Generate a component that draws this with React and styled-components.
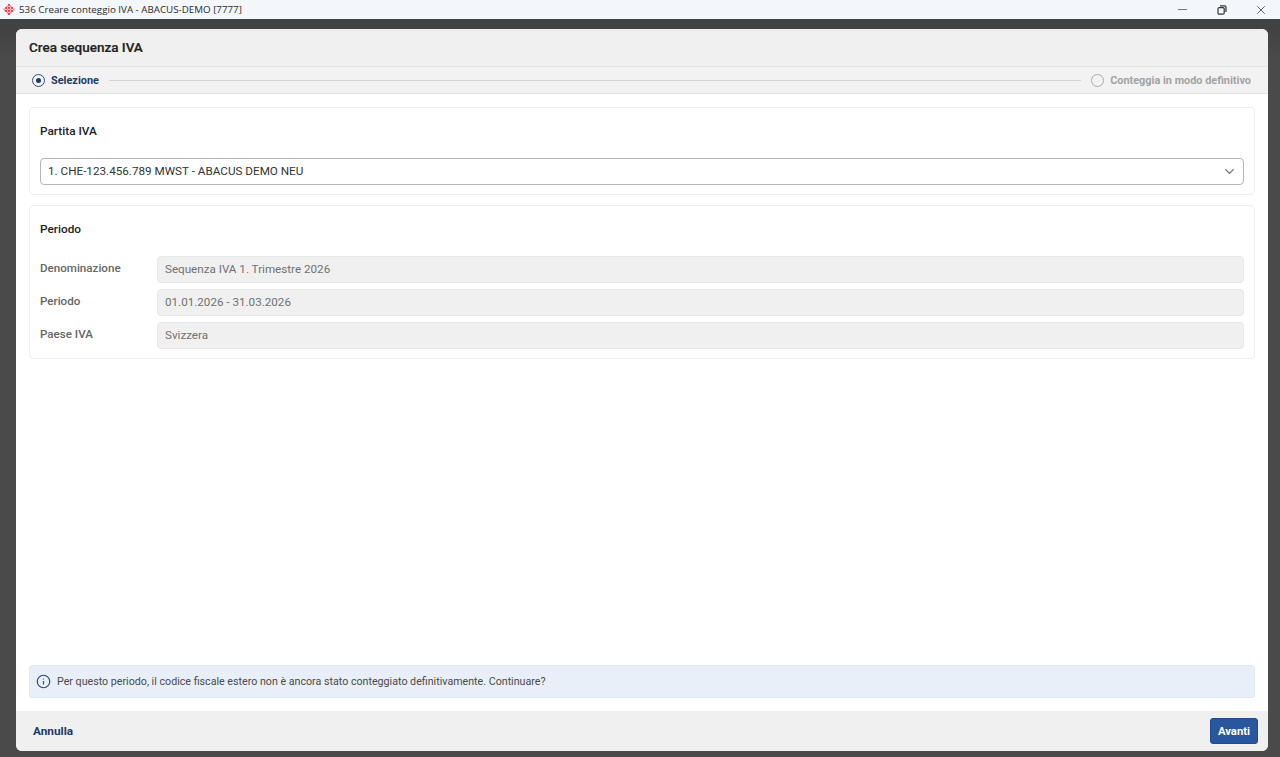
import React from 'react';
import styled, {createGlobalStyle} from 'styled-components';
import {ChevronDown, Info, X} from 'lucide-react';

const GlobalStyle = createGlobalStyle`
  html, body {
    margin: 0;
    padding: 0;
    height: 100%;
    overflow: hidden;
  }
  body {
    font-family: Roboto, "Liberation Sans", sans-serif;
    background: #4a4a4a;
  }
`;

const logoDots = [
  [5, 0, 1], [3.5, 1.5, 0], [6.5, 1.5, 0], [2, 3, 1], [5, 3, 1], [8, 3, 1],
  [0.5, 4.5, 0], [3.5, 4.5, 0], [6.5, 4.5, 0], [9.5, 4.5, 0],
  [2, 6, 1], [5, 6, 1], [8, 6, 1], [3.5, 7.5, 0], [6.5, 7.5, 0], [5, 9, 1],
];

const AppLogo = () => (
  <svg width="12" height="12" viewBox="0 0 12 12">
    {logoDots.map(([x, y, strong]) => (
      <rect
        key={`${x}-${y}`}
        x={x}
        y={y}
        width="2"
        height="2"
        fill={strong ? '#e8444c' : '#f48a8e'}
      />
    ))}
  </svg>
);

const RestoreIcon = () => (
  <svg width="10" height="10" viewBox="0 0 10 10" fill="none" stroke="#333" strokeWidth="1.2">
    <rect x="1" y="2.6" width="6.2" height="6.6" rx="1.2" />
    <path d="M3 0.9 H7.6 A1.4 1.4 0 0 1 9 2.3 V7" />
  </svg>
);

const App = () => {
  return (
    <>
      <GlobalStyle />
      <Window>
        <TitleBar>
          <TitleLeft>
            <AppLogo />
            <TitleText>536 Creare conteggio IVA - ABACUS-DEMO [7777]</TitleText>
          </TitleLeft>
          <WindowControls>
            <WindowButton><MinimizeBar /></WindowButton>
            <WindowButton><RestoreIcon /></WindowButton>
            <WindowButton><X size={14} strokeWidth={1.3} /></WindowButton>
          </WindowControls>
        </TitleBar>

        <Backdrop>
          <Dialog>
            <DialogHeader>Crea sequenza IVA</DialogHeader>

            <Stepper>
              <Step>
                <StepRadio $active />
                <StepLabel $active>Selezione</StepLabel>
              </Step>
              <StepLine />
              <Step>
                <StepRadio />
                <StepLabel>Conteggia in modo definitivo</StepLabel>
              </Step>
            </Stepper>

            <DialogBody>
              <Card>
                <CardTitle>Partita IVA</CardTitle>
                <SelectBox>
                  <span>1. CHE-123.456.789 MWST - ABACUS DEMO NEU</span>
                  <ChevronDown size={15} strokeWidth={2.2} color="#757575" />
                </SelectBox>
              </Card>

              <Card>
                <CardTitle>Periodo</CardTitle>
                <FieldList>
                  <FieldRow>
                    <FieldLabel>Denominazione</FieldLabel>
                    <ReadonlyInput>Sequenza IVA 1. Trimestre 2026</ReadonlyInput>
                  </FieldRow>
                  <FieldRow>
                    <FieldLabel>Periodo</FieldLabel>
                    <ReadonlyInput>01.01.2026 - 31.03.2026</ReadonlyInput>
                  </FieldRow>
                  <FieldRow>
                    <FieldLabel>Paese IVA</FieldLabel>
                    <ReadonlyInput>Svizzera</ReadonlyInput>
                  </FieldRow>
                </FieldList>
              </Card>

              <Notice>
                <Info size={15} strokeWidth={1.9} color="#2b4c80" />
                <span>Per questo periodo, il codice fiscale estero non è ancora stato conteggiato definitivamente. Continuare?</span>
              </Notice>
            </DialogBody>

            <DialogFooter>
              <CancelButton>Annulla</CancelButton>
              <NextButton>Avanti</NextButton>
            </DialogFooter>
          </Dialog>
        </Backdrop>
      </Window>
    </>
  );
};

const Window = styled.div`
  width: 1280px;
  height: 757px;
  display: flex;
  flex-direction: column;
`;

const TitleBar = styled.div`
  height: 19px;
  flex: none;
  display: flex;
  align-items: center;
  justify-content: space-between;
  padding-left: 3px;
  background: #f3f6fa;
`;

const TitleLeft = styled.div`
  display: flex;
  align-items: center;
  gap: 4px;
`;

const TitleText = styled.span`
  font-family: "Open Sans", "Noto Sans", sans-serif;
  font-size: 9.78px;
  color: #2b2b2b;
  white-space: nowrap;
`;

const WindowControls = styled.div`
  display: flex;
`;

const WindowButton = styled.div`
  width: 39px;
  height: 19px;
  display: flex;
  align-items: center;
  justify-content: center;
  color: #333;
`;

const MinimizeBar = styled.span`
  width: 9px;
  height: 1px;
  background: #777;
`;

const Backdrop = styled.div`
  flex: 1;
  display: flex;
  padding: 10px 12px 6px 16px;
  background: linear-gradient(180deg, #424242 0, #424242 8px, #4a4a4a 40px);
`;

const Dialog = styled.div`
  flex: 1;
  display: flex;
  flex-direction: column;
  background: #fff;
  border-radius: 6px;
  overflow: hidden;
`;

const DialogHeader = styled.div`
  height: 38px;
  flex: none;
  box-sizing: border-box;
  display: flex;
  align-items: center;
  padding: 0 13px 2px;
  background: #f0f0f0;
  border-bottom: 1px solid #e2e2e2;
  font-size: 13.5px;
  font-weight: 500;
  color: #222;
  -webkit-text-stroke: 0.2px #222;
`;

const Stepper = styled.div`
  height: 27px;
  flex: none;
  box-sizing: border-box;
  display: flex;
  align-items: center;
  gap: 10px;
  padding: 0 17px 0 16px;
  background: #f2f2f2;
  border-bottom: 1px solid #e2e2e2;
`;

const Step = styled.div`
  display: flex;
  align-items: center;
  gap: 6px;
`;

const StepRadio = styled.span`
  width: 13px;
  height: 13px;
  box-sizing: border-box;
  border-radius: 50%;
  border: 1.3px solid ${p => (p.$active ? '#2b4c80' : '#a8a8a8')};
  display: flex;
  align-items: center;
  justify-content: center;

  &::after {
    content: '';
    display: ${p => (p.$active ? 'block' : 'none')};
    width: 5px;
    height: 5px;
    border-radius: 50%;
    background: #1f3a68;
  }
`;

const StepLabel = styled.span`
  font-size: 10.9px;
  font-weight: 700;
  white-space: nowrap;
  color: ${p => (p.$active ? '#1f3a68' : '#a3a3a3')};
`;

const StepLine = styled.div`
  flex: 1;
  height: 1px;
  background: #d4d4d4;
`;

const DialogBody = styled.div`
  flex: 1;
  display: flex;
  flex-direction: column;
  gap: 10px;
  padding: 13px;
  background: #fff;
`;

const Card = styled.section`
  padding: 16px 10px 9px;
  background: #fff;
  border: 1px solid #efefef;
  border-radius: 4px;
`;

const CardTitle = styled.h3`
  margin: 0 0 20px;
  font-size: 11.8px;
  line-height: 14px;
  font-weight: 500;
  color: #222;
`;

const SelectBox = styled.div`
  height: 27px;
  box-sizing: border-box;
  display: flex;
  align-items: center;
  justify-content: space-between;
  padding: 0 6px 1px 7px;
  border: 1px solid #b5b5b5;
  border-radius: 4px;
  background: #fff;
  font-size: 11.7px;
  color: #333;
`;

const FieldList = styled.div`
  display: flex;
  flex-direction: column;
  gap: 6px;
`;

const FieldRow = styled.div`
  display: grid;
  grid-template-columns: 117px 1fr;
  align-items: center;
`;

const FieldLabel = styled.span`
  padding-bottom: 3px;
  font-size: 11.6px;
  font-weight: 500;
  color: #666;
`;

const ReadonlyInput = styled.div`
  height: 27px;
  box-sizing: border-box;
  display: flex;
  align-items: center;
  padding: 0 7px 1px;
  background: #f0f0f0;
  border: 1px solid #e8e8e8;
  border-radius: 4px;
  font-size: 11.65px;
  color: #707070;
`;

const Notice = styled.div`
  margin-top: auto;
  height: 33px;
  box-sizing: border-box;
  display: flex;
  align-items: center;
  gap: 6px;
  padding: 0 6px;
  background: #e8eff9;
  border: 1px solid #dfe8f5;
  border-radius: 3px;
  font-size: 10.68px;
  color: #4a4a4a;
`;

const DialogFooter = styled.div`
  height: 40px;
  flex: none;
  display: flex;
  align-items: center;
  justify-content: space-between;
  padding: 0 10px 0 17px;
  background: #f0f0f0;
`;

const CancelButton = styled.button`
  padding: 0;
  border: none;
  background: none;
  font-family: inherit;
  font-size: 11.8px;
  font-weight: 700;
  color: #1f3a68;
`;

const NextButton = styled.button`
  width: 48px;
  height: 26px;
  padding: 0;
  border: 1px solid #1f4a8c;
  border-radius: 3px;
  background: #2857a0;
  font-family: inherit;
  font-size: 11.3px;
  font-weight: 700;
  color: #fff;
`;

export default App;
